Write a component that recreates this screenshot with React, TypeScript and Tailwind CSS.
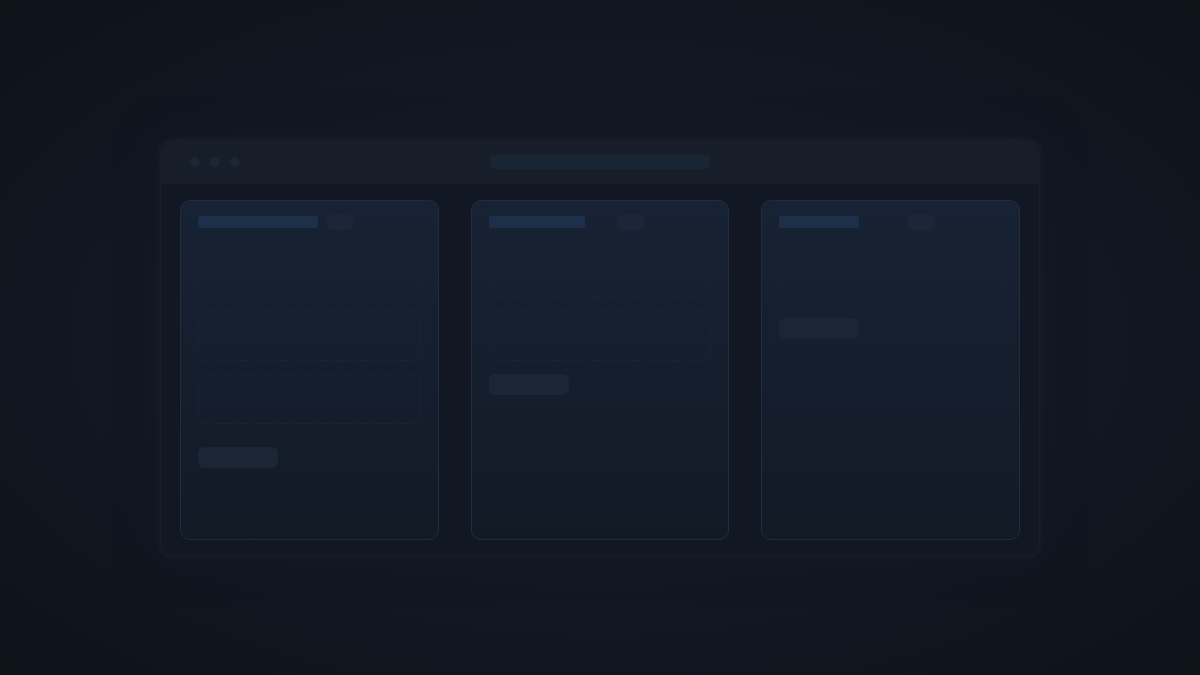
import React from 'react';

type Column = {
  titleWidth: string;
  boxes: number;
  buttonGap: string;
};

const columns: Column[] = [
  { titleWidth: 'w-[120px]', boxes: 3, buttonGap: 'mt-[23px]' },
  { titleWidth: 'w-[96px]', boxes: 2, buttonGap: 'mt-[13px]' },
  { titleWidth: 'w-[80px]', boxes: 1, buttonGap: 'mt-5' },
];

function SkeletonCard({ titleWidth, boxes, buttonGap }: Column) {
  return (
    <div className="h-[340px] rounded-[10px] border border-[#212d3e] bg-gradient-to-b from-[#172234] to-[#131a26] px-[17px] pt-[13px]">
      <div className="flex h-4 items-center gap-2">
        <div className="w-[120px]">
          <div className={`h-3 rounded-[3px] bg-[#1e3049] ${titleWidth}`} />
        </div>
        <div className="h-4 w-7 rounded-full bg-[#1b2738]" />
      </div>

      <div className="mt-[18px] flex flex-col gap-[13px]">
        {Array.from({ length: boxes }).map((_, i) => (
          <div
            key={i}
            className="h-[50px] rounded-md border border-dashed border-[#1a2536]"
          />
        ))}
      </div>

      <div className={`h-[21px] w-20 rounded-md bg-[#1a2636] ${buttonGap}`} />
    </div>
  );
}

export default function App() {
  return (
    <div className="flex h-[675px] w-full items-center justify-center bg-[radial-gradient(ellipse_at_center,#161c27_0%,#121722_55%,#0e1219_100%)] pt-5 font-['Inter',sans-serif]">
      <div className="w-[880px] overflow-hidden rounded-xl border border-[#181f2b] bg-[#121823] shadow-[0_0_0_3px_rgba(22,28,38,0.7),0_0_40px_rgba(22,28,40,0.5)]">
        {/* title bar */}
        <div className="relative flex h-[43px] items-center bg-[#171d29] pl-[29px]">
          <div className="flex gap-[10px]">
            <span className="h-[10px] w-[10px] rounded-full bg-[#1c2635]" />
            <span className="h-[10px] w-[10px] rounded-full bg-[#1c2635]" />
            <span className="h-[10px] w-[10px] rounded-full bg-[#1c2635]" />
          </div>
          <div className="absolute left-1/2 top-[14px] h-[14px] w-[220px] -translate-x-1/2 rounded bg-[#1a2533]" />
        </div>

        <div className="grid grid-cols-3 gap-8 px-[19px] pb-[15px] pt-4">
          {columns.map((c, i) => (
            <SkeletonCard key={i} {...c} />
          ))}
        </div>
      </div>
    </div>
  );
}
